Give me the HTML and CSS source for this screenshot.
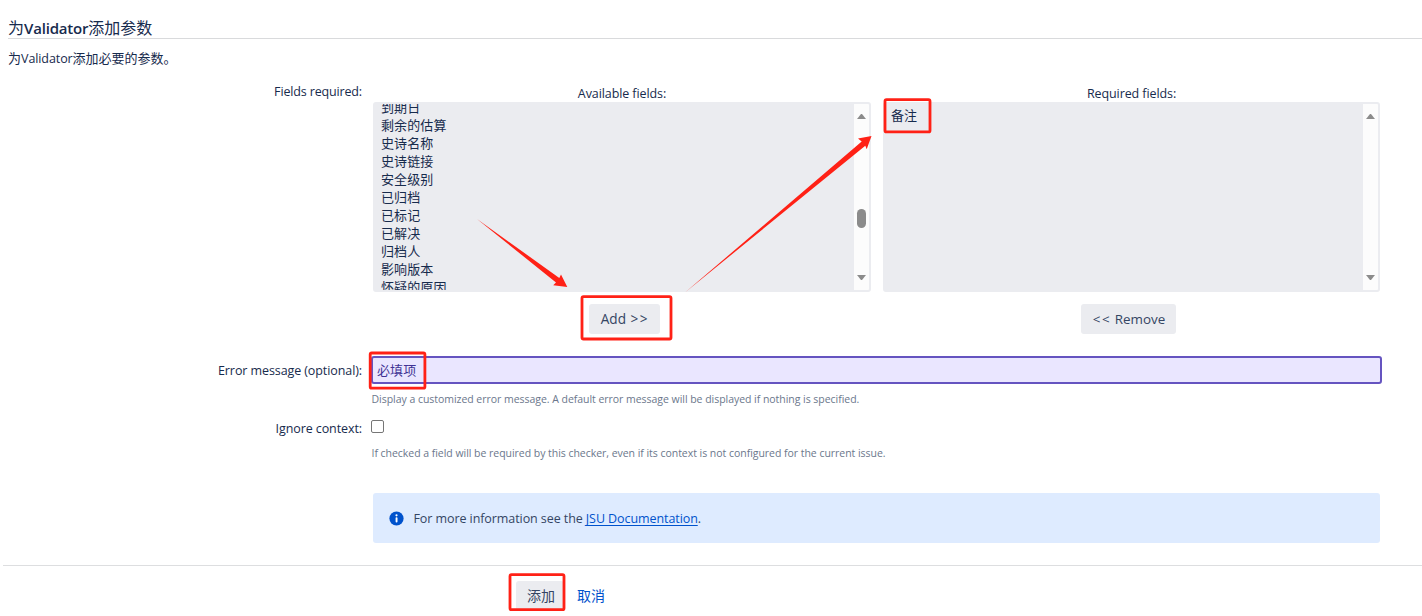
FILE: index.html
```html
<!DOCTYPE html>
<html lang="zh-CN">
<head>
<meta charset="utf-8">
<title>为Validator添加参数</title>
<link rel="stylesheet" href="styles.css">
</head>
<body>
<header class="head">
  <h2 class="title">为<b>Validator</b>添加参数</h2>
  <p class="desc">为<span class="latin">Validator</span>添加必要的参数。</p>
</header>
<form class="form">
  <div class="row fields">
    <label class="label"><span class="latin tight">Fields required:</span></label>
    <div class="picker">
      <section class="side">
        <div class="caption"><span class="latin">Available fields:</span></div>
        <div class="list">
          <ul class="options scrolled">
            <li>到期日</li><li>剩余的估算</li><li>史诗名称</li><li>史诗链接</li><li>安全级别</li><li>已归档</li><li>已标记</li><li>已解决</li><li>归档人</li><li>影响版本</li><li>怀疑的原因</li>
          </ul>
          <div class="scrollbar"><i class="up"></i><i class="thumb"></i><i class="down"></i></div>
        </div>
        <div class="action add"><button type="button" class="btn btn-add">Add <span class="chevrons">&gt;&gt;</span></button></div>
      </section>
      <section class="side">
        <div class="caption"><span class="latin">Required fields:</span></div>
        <div class="list">
          <ul class="options"><li>备注</li></ul>
          <div class="scrollbar"><i class="up"></i><i class="down"></i></div>
        </div>
        <div class="action remove"><button type="button" class="btn btn-remove"><span class="chevrons">&lt;&lt;</span> Remove</button></div>
      </section>
    </div>
  </div>
  <div class="row message">
    <label class="label"><span class="latin">Error message (optional):</span></label>
    <div class="control">
      <div class="input">必填项</div>
      <p class="help">Display a customized error message. A default error message will be displayed if nothing is specified.</p>
    </div>
  </div>
  <div class="row context">
    <label class="label"><span class="latin">Ignore context:</span></label>
    <div class="control">
      <span class="check"></span>
      <p class="help">If checked a field will be required by this checker, even if its context is not configured for the current issue.</p>
    </div>
  </div>
  <div class="info">
    <svg class="info-icon" width="15" height="15" viewBox="0 0 15 15"><circle cx="7.5" cy="7.5" r="7.1" fill="#0052cc"/><circle cx="7.5" cy="4.3" r="1.1" fill="#fff"/><rect x="6.6" y="6.2" width="1.9" height="5.2" rx=".9" fill="#fff"/></svg>
    <span class="latin info-text">For more information see the <a href="#">JSU Documentation</a>.</span>
  </div>
  <footer class="foot">
    <button type="button" class="btn btn-submit">添加</button>
    <a class="cancel" href="#">取消</a>
  </footer>
</form>
<svg class="marks" width="1422" height="616" viewBox="0 0 1422 616">
  <g class="frames">
    <rect x="885" y="99.700" width="45" height="32.200" rx="1.500"/>
    <rect x="582" y="296.700" width="89" height="42.300" rx="1.500"/>
    <rect x="370.200" y="353" width="54.700" height="35.200" rx="1.500"/>
    <rect x="510" y="574.700" width="54" height="35" rx="1.500"/>
  </g>
  <g class="arrows">
    <path d="M477 219L559.300 278L561 274.500L567.300 287L553.200 285.300L556 282.500Z"/>
    <path d="M685 292.500L861.700 141.500L858 138.600L871.500 136L866.700 149.200L865.300 145.700Z"/>
  </g>
</svg>
</body>
</html>
```

FILE: styles.css
```css
* { box-sizing: border-box; }
body {
  margin: 0;
  height: 616px;
  overflow: hidden;
  position: relative;
  background: #fff;
  color: #172b4d;
  font: 13px/18px "Open Sans", "Noto Sans CJK SC", sans-serif;
}
p, h2, ul { margin: 0; padding: 0; }
.latin { font-size: 12.5px; letter-spacing: -0.09px; }
.latin.tight { letter-spacing: -0.15px; }
.head { padding: 18px 0 0 8px; height: 82px; }
.title {
  height: 21px;
  border-bottom: 1px solid #d9dadc;
  font-size: 16px;
  line-height: 20px;
  font-weight: 400;
}
.title b { font-weight: 600; font-size: 15px; letter-spacing: -0.2px; }
.desc { padding-top: 10px; }
.row { display: flex; gap: 9px; }
.label { width: 362px; text-align: right; flex: none; white-space: nowrap; }
.fields { height: 274px; }
.picker { display: flex; gap: 12px; width: 1009px; padding-left: 2px; }
.side:first-child { width: 498px; }
.side:last-child { width: 497px; }
.caption { height: 20px; padding-top: 2px; text-align: center; }
.list {
  display: flex;
  height: 190px;
  border: 2px solid #ebecf0;
  border-radius: 3px;
  background: #ebecf0;
  overflow: hidden;
}
.options { flex: 1; list-style: none; padding: 2px 6px; letter-spacing: 0.1px; }
.options.scrolled { margin-top: -8px; height: 220px; }
.options li { height: 18px; }
.scrollbar {
  width: 15px;
  background: #fcfcfc;
  display: flex;
  flex-direction: column;
  align-items: center;
  padding: 10px 0;
}
.up { border: 4.5px solid transparent; border-width: 0 4.5px 5px; border-bottom-color: #8b8b8b; width: 9px; }
.down { border: 4.5px solid transparent; border-width: 5px 4.5px 0; border-top-color: #8b8b8b; width: 9px; margin-top: auto; }
.thumb { width: 9px; height: 19px; border-radius: 5px; background: #8b8b8b; margin-top: 90px; }
.action { display: flex; justify-content: center; padding-top: 12px; }
.add { padding-left: 5px; }
.remove { padding-right: 6px; }
.btn {
  height: 30px;
  border: 0;
  border-radius: 3px;
  background: #ebecf0;
  color: #344563;
  padding: 0;
  text-align: center;
  font: 14px/30px "Open Sans", "Noto Sans CJK SC", sans-serif;
  white-space: nowrap;
}
.btn-add { width: 71px; font-size: 13.6px; padding-left: 1px; }
.btn-remove { width: 95px; font-size: 13.4px; padding-left: 1px; }
.chevrons { letter-spacing: 1.6px; }
.btn-add .chevrons { margin-left: 1px; }
.message { height: 64px; }
.message .label { padding-top: 5px; }
.control { width: 1011px; }
.input {
  height: 28px;
  border: 2px solid #6554c0;
  border-radius: 3px;
  background: #eae6ff;
  color: #403294;
  line-height: 24px;
  padding: 0 4px;
  letter-spacing: 0.1px;
}
.help {
  font-size: 10.5px;
  line-height: 16px;
  letter-spacing: -0.035px;
  color: #6b778c;
  padding: 7px 0 0 0.5px;
  white-space: nowrap;
}
.context { height: 73px; }
.context .label { margin-top: -1px; }
.context .help { padding-top: 12px; }
.check { display: block; width: 13px; height: 13px; border: 1px solid #767676; border-radius: 2px; }
.info {
  height: 50px;
  margin: 0 42px 22px 373px;
  padding-left: 16px;
  display: flex;
  align-items: center;
  gap: 9px;
  border-radius: 3px;
  background: #deebff;
  color: #344563;
  white-space: nowrap;
}
.info-icon { flex: none; }
.info-text { padding: 2px 0 0 0.5px; letter-spacing: -0.08px; }
.info a { color: #0052cc; text-decoration: underline; text-underline-offset: 2px; }
.foot {
  margin-left: 3px;
  border-top: 1px solid #dddee0;
  padding: 15px 0 0 513px;
  display: flex;
  gap: 13px;
}
.btn-submit { width: 48px; padding-left: 2px; }
.cancel { color: #0052cc; text-decoration: none; font-size: 14px; line-height: 30px; }
.marks { position: absolute; left: 0; top: 0; }
.frames rect { fill: none; stroke: #ff2116; stroke-width: 2.8; }
.arrows path { fill: #ff2116; }
```
